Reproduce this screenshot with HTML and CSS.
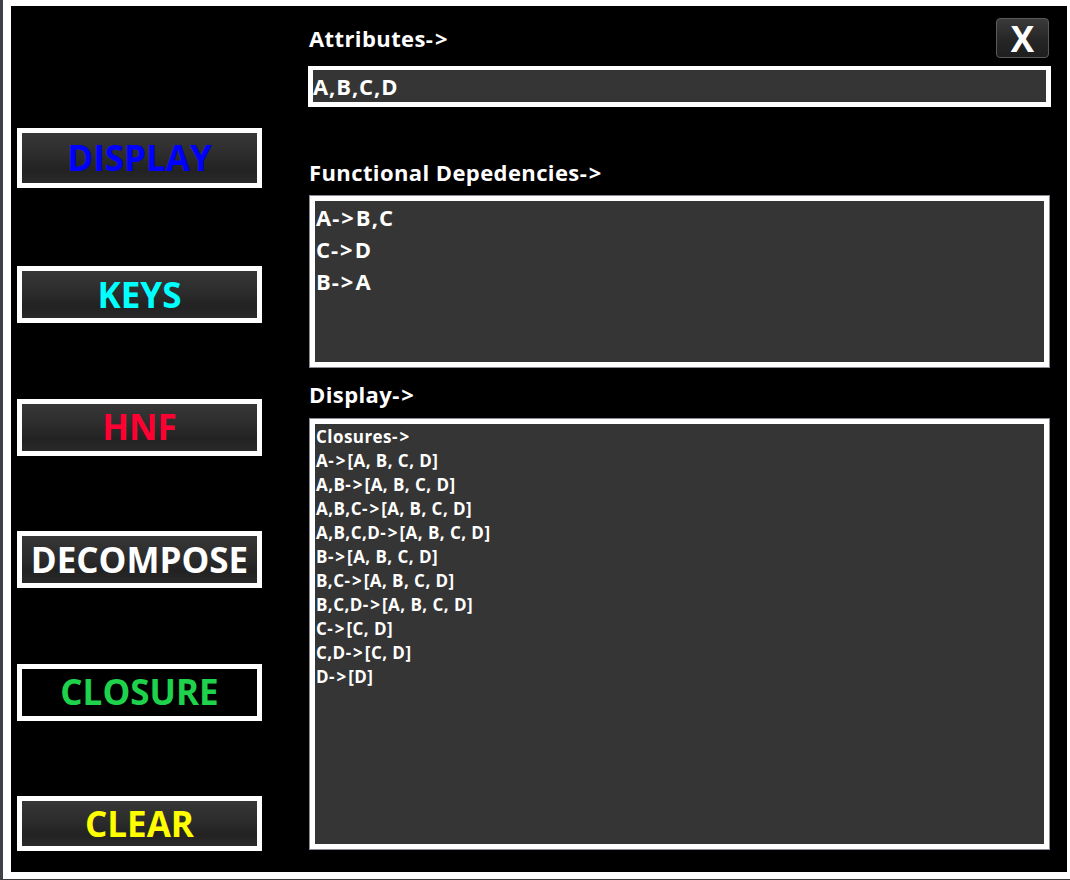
FILE: index.html
```html
<!DOCTYPE html>
<html>
<head>
<meta charset="utf-8">
<link rel="stylesheet" href="styles.css">
</head>
<body>
<div class="window">
  <div class="side">
    <div class="btn btn-display"><span class="c-blue">DISPLAY</span></div>
    <div class="btn"><span class="c-cyan">KEYS</span></div>
    <div class="btn"><span class="c-red">HNF</span></div>
    <div class="btn"><span class="c-white">DECOMPOSE</span></div>
    <div class="btn btn-black"><span class="c-green">CLOSURE</span></div>
    <div class="btn btn-last"><span class="c-yellow">CLEAR</span></div>
  </div>
  <div class="main">
    <div class="header">
      <div class="label">Attributes<span class="arr">-&gt;</span></div>
      <div class="close">X</div>
    </div>
    <div class="field">A,B,C,D</div>
    <div class="label label-fd">Functional Depedencies<span class="arr">-&gt;</span></div>
    <div class="area fd">
      <div>A<span class="arr">-&gt;</span>B,C</div>
      <div>C<span class="arr">-&gt;</span>D</div>
      <div>B<span class="arr">-&gt;</span>A</div>
    </div>
    <div class="label label-display">Display<span class="arr">-&gt;</span></div>
    <div class="area out">
      <div>Closures<span class="arr">-&gt;</span></div>
      <div>A<span class="arr">-&gt;</span>[A, B, C, D]</div>
      <div>A,B<span class="arr">-&gt;</span>[A, B, C, D]</div>
      <div>A,B,C<span class="arr">-&gt;</span>[A, B, C, D]</div>
      <div>A,B,C,D<span class="arr">-&gt;</span>[A, B, C, D]</div>
      <div>B<span class="arr">-&gt;</span>[A, B, C, D]</div>
      <div>B,C<span class="arr">-&gt;</span>[A, B, C, D]</div>
      <div>B,C,D<span class="arr">-&gt;</span>[A, B, C, D]</div>
      <div>C<span class="arr">-&gt;</span>[C, D]</div>
      <div>C,D<span class="arr">-&gt;</span>[C, D]</div>
      <div>D<span class="arr">-&gt;</span>[D]</div>
    </div>
  </div>
</div>
</body>
</html>
```
FILE: styles.css
```css
html, body {
  margin: 0;
  padding: 0;
}
body {
  background: #ffffff;
  width: 1070px;
  height: 880px;
  box-sizing: border-box;
  border-left: 3px solid #3e4246;
  border-bottom: 1px solid #3a3a3a;
  padding: 6px 3px 0 8px;
  font-family: "Open Sans", "Noto Sans", sans-serif;
  font-weight: 700;
  color: #ffffff;
  overflow: hidden;
}
.window {
  background: #000000;
  width: 1056px;
  height: 866px;
  display: flex;
  align-items: flex-start;
}
.side {
  margin-left: 6px;
  padding-top: 122px;
  display: flex;
  flex-direction: column;
  gap: 75.5px;
  width: 245px;
}
.btn {
  box-sizing: border-box;
  height: 57px;
  border: 5px solid #ffffff;
  background: linear-gradient(#373737 0%, #2c2c2c 45%, #222222 75%, #2a2a2a 100%);
  display: flex;
  align-items: center;
  justify-content: center;
  font-size: 35px;
  line-height: 1;
  padding-bottom: 1px;
}
.btn-display {
  height: 60px;
  margin-bottom: 2.5px;
}
.btn-last {
  height: 55px;
}
.btn-black {
  background: #000000;
}
.c-blue { color: #0000ff; }
.c-cyan { color: #00ffff; }
.c-red { color: #ff0033; }
.c-white { color: #ffffff; }
.c-green { color: #1fd24c; }
.c-yellow { color: #ffff00; }

.arr {
  letter-spacing: 2px;
}
.main {
  margin-left: 46px;
  width: 743px;
  display: flex;
  flex-direction: column;
}
.header {
  margin-top: 12px;
  height: 40px;
  display: flex;
  align-items: center;
  justify-content: space-between;
}
.label {
  font-size: 22px;
  line-height: 28px;
  padding-left: 1px;
  letter-spacing: 0.4px;
}
.close {
  box-sizing: border-box;
  width: 53px;
  height: 40px;
  margin-right: 2px;
  border: 1px solid #5a5a5a;
  border-radius: 4px;
  background: linear-gradient(#3a3a3a, #262626 55%, #1e1e1e);
  display: flex;
  align-items: center;
  justify-content: center;
  font-size: 35px;
  line-height: 1;
  letter-spacing: 0;
}
.field {
  margin-top: 8px;
  box-sizing: border-box;
  height: 41px;
  border: 5px solid #ffffff;
  border-top-width: 4px;
  background: #353535;
  font-size: 22px;
  line-height: 32px;
  letter-spacing: 0.9px;
}
.label-fd {
  margin-top: 51px;
}
.area {
  box-sizing: border-box;
  margin-left: 2px;
  width: 739px;
  border: 5px solid #ffffff;
  box-shadow: 0 0 0 1px #8c8c99;
  background: #353535;
}
.fd {
  margin-top: 10px;
  height: 171px;
  font-size: 22px;
  line-height: 32px;
  padding: 0 0 0 1px;
  letter-spacing: 1px;
}
.label-display {
  margin-top: 13px;
}
.out {
  margin-top: 11px;
  height: 430px;
  font-size: 17px;
  line-height: 24px;
  padding: 1px 0 0 1px;
  letter-spacing: 0.45px;
}
```
